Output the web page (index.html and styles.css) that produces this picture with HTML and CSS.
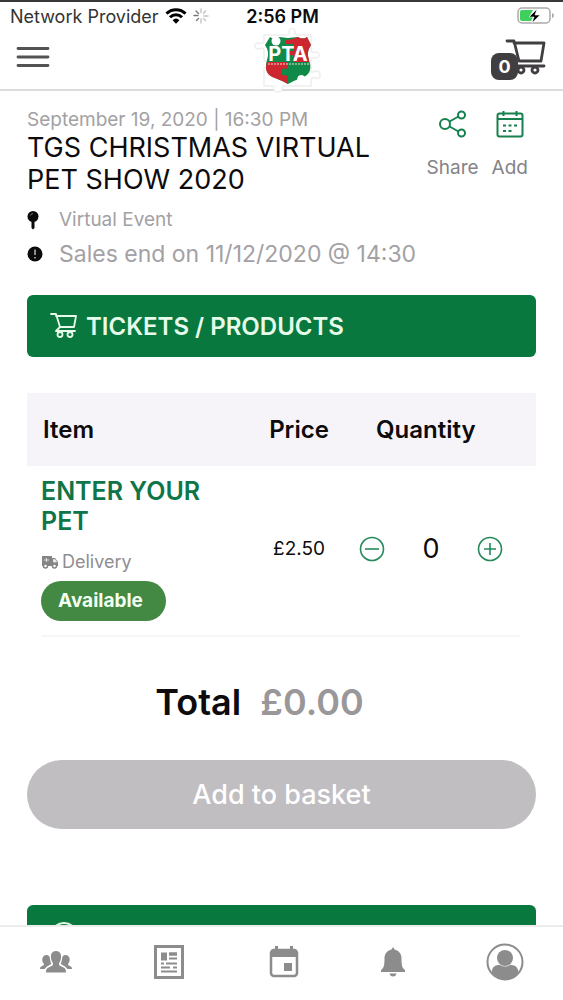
FILE: index.html
```
<!DOCTYPE html>
<html lang="en">

<head>
    <meta charset="UTF-8">
    <meta name="viewport" content="width=device-width, initial-scale=1.0">
    <title>TGS Christmas Virtual Pet Show 2020</title>
    <link rel="stylesheet" href="styles.css">
</head>

<body>
    <div class="status-bar">
        <div class="network">
            <span>Network Provider</span>
            <svg width="22" height="16" viewBox="0 0 22 16" fill="none" stroke="#000" stroke-width="3">
                <path d="M1.5 5.6a13.5 13.5 0 0 1 19 0M5 9.3a8.6 8.6 0 0 1 12 0" />
                <path d="M11 15.8l-3.4-3.6a5 5 0 0 1 6.8 0z" fill="#000" stroke="none" />
            </svg>
            <svg class="spinner" width="16" height="16" viewBox="0 0 16 16" stroke-width="1.4" stroke-linecap="round">
                <path d="M1 7.5h4M3 3l2.500 2.500M3.500 12.500l2-2" stroke="#777" />
                <path d="M8 1v3.500M8 11v4M12.500 3l-2 2.500M11 8h4M10.500 10.500l2 2" stroke="#c4c4c4" />
            </svg>
        </div>
        <strong class="clock">2:56 PM</strong>
        <svg class="battery" width="38" height="18" viewBox="0 0 38 18">
            <rect x="1" y="1" width="32" height="15" rx="4" fill="#fff" stroke="#aaa" stroke-width="1.5" />
            <path d="M35 6v5q2-.5 2-2.500t-2-2.500" fill="#aaa" />
            <path d="M5 3h11l-4 7h4l-2 4H5q-2 0-2-2V5q0-2 2-2z" fill="#3fcf5d" />
            <path d="M20 2l-8 8h5l-2 6 8-8h-5z" fill="#000" stroke="#fff" stroke-width=".6" />
        </svg>
    </div>

    <header class="top-bar">
        <button class="icon-button" type="button" aria-label="Menu">
            <svg width="34" height="22" viewBox="0 0 34 22" stroke="#555256" stroke-width="2.800" stroke-linecap="round">
                <path d="M2 2.500h30M2 11h30M2 19.500h30" />
            </svg>
        </button>
        <a class="logo" href="#" aria-label="PTA home">
            <svg width="74" height="66" viewBox="0 0 74 66">
                <path d="M12 7h23q3 0 2-4 1-3 3-3t3 3q-1 4 2 4h14v15q0 3 4 2 4 0 4 3t-4 3q-4-1-4 2v10q0 3 5 1 4 0 4 4t-4 3q-5-1-5 2v6H32q-3 0-2 4-1 2-4 2t-4-2q1-4-2-4h-8V41q0-3 4-2 4 0 4-3t-4-3q-4 1-4-2V22q0-3-5-1-4 0-4-3t4-3q5 1 5-2z" fill="#fff" stroke="#eee" stroke-width="1.500" />
                <path d="M18 9q4 3 9 0l9 1 10-1q5 3 9 0l4 8q-5 7-2 15 5 14-8 18-8 3-13 6-5-3-13-6-12-4-8-18 3-8-2-15z" fill="#0f8a48" />
                <path d="M34 12q5 0 12-3 5 3 9 0l4 8q-5 7-2 15v2H41v-7q-5 1-4-4h4v-7h-7z" fill="#ce2631" />
                <path d="M15 34h21v7q-7-2-7 3t7 3v9q-5-3-13-6-12-4-8-16z" fill="#ce2631" />
                <circle cx="24" cy="13" r="4.500" fill="#fff" />
                <path d="M45 53q0-6 4-6 4 0 4 4l-8 5z" fill="#fff" />
                <path d="M16 36h41" stroke="#f3d9d9" stroke-width="1" stroke-dasharray="2 1" />
                <text class="logo-text" x="36" y="33" text-anchor="middle">PTA</text>
            </svg>
        </a>
        <button class="icon-button cart" type="button" aria-label="Basket">
            <svg width="44" height="36" viewBox="0 0 44 36" fill="none" stroke="#413e41" stroke-width="2.800" stroke-linecap="round" stroke-linejoin="round">
                <path d="M5 2h7l5 20h22l3-18H12M16 27h26" />
                <circle cx="19" cy="31" r="3" />
                <circle cx="33" cy="31" r="3" />
            </svg>
            <span class="cart-count">0</span>
        </button>
    </header>

    <main class="content">
        <section class="event">
            <div class="event-title">
                <p class="date">September 19, 2020 | 16:30 PM</p>
                <h1>TGS CHRISTMAS VIRTUAL PET SHOW 2020</h1>
            </div>
            <div class="actions">
                <button class="action" type="button">
                    <svg width="28" height="28" viewBox="0 0 28 28" fill="none" stroke="#16804f" stroke-width="2">
                        <circle cx="6" cy="14" r="5" />
                        <circle cx="22.500" cy="5" r="3.500" />
                        <circle cx="22.500" cy="23" r="3.500" />
                        <path d="M10.500 11.500L19.500 6.500M10.500 16.500L19.500 21.500" />
                    </svg>
                    Share
                </button>
                <button class="action" type="button">
                    <svg width="28" height="28" viewBox="0 0 28 28" fill="none" stroke="#16804f" stroke-width="2">
                        <rect x="1.500" y="3.500" width="25" height="23" rx="2" />
                        <path d="M1.500 9h25M7.500 1v5M20.500 1v5" />
                        <path d="M7 15.500h3m2.500 0h3m2.500 0h3M7 21h3m2.500 0h3" />
                    </svg>
                    Add
                </button>
            </div>
        </section>

        <ul class="details">
            <li>
                <svg width="16" height="20" viewBox="0 0 16 20">
                    <circle cx="6" cy="6.500" r="5.500" fill="#0b0b0b" />
                    <path d="M4.500 11h3v7L6 19.500 4.500 18z" fill="#0b0b0b" />
                    <path d="M3.500 5.500q.5-2 2.500-2" fill="none" stroke="#777" />
                </svg>
                Virtual Event
            </li>
            <li class="sales-end">
                <svg width="16" height="16" viewBox="0 0 16 16">
                    <circle cx="8" cy="8" r="7.500" fill="#0b0b0b" />
                    <path d="M8 3.500v5.500M8 11v1.500" stroke="#bbb" stroke-width="1.500" />
                </svg>
                Sales end on 11/12/2020 @ 14:30
            </li>
        </ul>

        <h2 class="banner">
            <svg width="28" height="26" viewBox="0 0 28 26" fill="none" stroke="#e6fbe9" stroke-width="1.800" stroke-linecap="round" stroke-linejoin="round">
                <path d="M1 1h5l4 13h14l2-11H6M10 14l-4 4h19" />
                <circle cx="10" cy="21.500" r="2.500" />
                <circle cx="20" cy="21.500" r="2.500" />
            </svg>
            TICKETS / PRODUCTS
        </h2>

        <table class="products">
            <thead>
                <tr>
                    <th>Item</th>
                    <th class="price">Price</th>
                    <th class="quantity-heading">Quantity</th>
                </tr>
            </thead>
            <tbody>
                <tr>
                    <td>
                        <h3>ENTER YOUR PET</h3>
                        <p class="delivery">
                            <svg width="18" height="14" viewBox="0 0 18 14">
                                <path d="M1 1h10v2h3l3 4v4H1z" fill="#858585" />
                                <path d="M12.500 4.500h1.500l1.500 2.500h-3zM3 5h5M5.500 3v4" fill="#fff" stroke="#ddd" />
                                <circle cx="4.500" cy="11" r="2" fill="#fff" stroke="#858585" stroke-width="1.500" />
                                <circle cx="13.500" cy="11" r="2" fill="#fff" stroke="#858585" stroke-width="1.500" />
                            </svg>
                            Delivery
                        </p>
                        <span class="badge">Available</span>
                    </td>
                    <td class="price">£2.50</td>
                    <td class="quantity">
                        <button class="icon-button" type="button" aria-label="Decrease quantity">
                            <svg width="26" height="26" viewBox="0 0 26 26" fill="none" stroke="#25895a" stroke-width="1.600">
                                <circle cx="13" cy="13" r="11.500" />
                                <path d="M6 13h14" />
                            </svg>
                        </button>
                        <input type="text" inputmode="numeric" value="0" aria-label="Quantity">
                        <button class="icon-button" type="button" aria-label="Increase quantity">
                            <svg width="26" height="26" viewBox="0 0 26 26" fill="none" stroke="#25895a" stroke-width="1.600">
                                <circle cx="13" cy="13" r="11.500" />
                                <path d="M7 13h12M13 7v12" />
                            </svg>
                        </button>
                    </td>
                </tr>
            </tbody>
        </table>

        <p class="total">Total <span class="amount">£0.00</span></p>
        <button class="add-to-basket" type="button">Add to basket</button>

        <div class="banner">
            <svg width="28" height="28" viewBox="0 0 28 28" fill="none" stroke="#e6fbe9" stroke-width="2">
                <circle cx="14" cy="14" r="13" />
                <path d="M14 12v8M14 7v2" />
            </svg>
        </div>
    </main>

    <nav class="tab-bar">
        <a href="#" aria-label="Groups">
            <svg width="34" height="24" viewBox="0 0 34 24" fill="#8c8c8c">
                <path d="M17 1c4 0 5.500 3 5 7-.3 3-1.500 4-2 5.500 0 2 1 2.500 3.500 3.500C26 18 27 19 27 22.500H7c0-3.500 1-4.500 3.500-5.500 2.500-1 3.500-1.500 3.500-3.500-.5-1.500-1.700-2.500-2-5.500-.5-4 1-7 5-7z" />
                <path d="M7.500 5c2 0 3 1 3.300 3 .3 3 1 4.500 1.500 6L8 16.500 5.500 19H1c0-2 1-2.800 3.500-3.500L5 14c-3-3-2-9 2.500-9z" />
                <path d="M26.500 5c-2 0-3 1-3.300 3-.3 3-1 4.500-1.500 6l4.300 2.500 2.500 2.500H33c0-2-1-2.800-3.500-3.500L29 14c3-3 2-9-2.500-9z" />
            </svg>
        </a>
        <a href="#" aria-label="News">
            <svg width="32" height="36" viewBox="0 0 32 36" fill="none" stroke="#8c8c8c">
                <rect x="2.500" y="2.500" width="27" height="31" stroke-width="3" />
                <path d="M8 8.500h6v8H8z" fill="#8c8c8c" stroke="none" />
                <path d="M16 10h8" stroke-width="3.500" />
                <path d="M16 14.500h8M8 19.500h3m2 0h11M8 23.500h9m3 0h4M8 27.500h16" stroke-width="1.800" />
            </svg>
        </a>
        <a href="#" aria-label="Events">
            <svg width="34" height="34" viewBox="-3 0 34 34">
                <rect x="2" y="5" width="26" height="26" rx="3" fill="none" stroke="#8c8c8c" stroke-width="2.500" />
                <path d="M2 5h26v7H2zM6 1h3v5H6zM21 1h3v5h-3zM15 18h8v8h-8z" fill="#8c8c8c" />
            </svg>
        </a>
        <a href="#" aria-label="Notifications">
            <svg width="26" height="32" viewBox="0 0 26 32" fill="#8c8c8c">
                <path d="M13 1l1.500 2.500C19 4.500 21.500 8 21.500 12c0 7 .5 10 3.500 12v2H1v-2c3-2 3.500-5 3.500-12 0-4 2.500-7.500 7-8.500z" />
                <path d="M9.500 27.500h7c-.5 2-1.500 3-3.500 3s-3-1-3.500-3z" />
            </svg>
        </a>
        <a href="#" aria-label="Profile">
            <svg width="38" height="38" viewBox="0 0 38 38">
                <circle cx="19" cy="19" r="17.500" fill="none" stroke="#8c8c8c" stroke-width="2" />
                <circle cx="19" cy="15" r="8" fill="#8c8c8c" />
                <path d="M5.500 29q1-7 7-7h1.500q5 3 10 0H25.500q6 0 7 7-5.500 7.500-13.500 7.500T5.500 29z" fill="#8c8c8c" />
            </svg>
        </a>
    </nav>
</body>

</html>
```
FILE: styles.css
```
* {
    box-sizing: border-box;
}

body {
    margin: 0;
    height: 100vh;
    display: flex;
    flex-direction: column;
    background-color: #fff;
    color: #0d0b0d;
    font-family: Inter, "Liberation Sans", sans-serif;
    overflow: hidden;
}

h1,
h2,
h3,
p,
ul {
    margin: 0;
    padding: 0;
}

button,
input {
    padding: 0;
    border: 0;
    background: none;
    color: inherit;
    font-family: inherit;
}

svg {
    display: block;
    flex-shrink: 0;
}

.status-bar {
    display: grid;
    grid-template-columns: 1fr auto 1fr;
    align-items: center;
    height: 30px;
    padding: 0 8px 0 10px;
    border-top: 2px solid #3a383b;
    font-size: 18px;
}

.network {
    display: flex;
    align-items: center;
    gap: 6px;
    color: #333;
    white-space: nowrap;
}

.clock {
    font-weight: 600;
}

.battery {
    justify-self: end;
}

.top-bar {
    display: grid;
    grid-template: 100% / 1fr auto 1fr;
    align-items: center;
    height: 61px;
    padding: 0 17px 6px 16px;
    border-bottom: 2px solid #dcdcdc;
}

.icon-button {
    justify-self: start;
}

.logo {
    padding: 8px 0 0 16px;
}

.logo-text {
    fill: #fff;
    font-size: 20px;
    font-weight: 700;
}

.cart {
    position: relative;
    justify-self: end;
}

.cart-count {
    position: absolute;
    left: -11px;
    bottom: -5px;
    width: 27px;
    border-radius: 8px;
    background-color: #413e41;
    color: #fff;
    font-size: 18px;
    font-weight: 700;
    line-height: 27px;
}

.content {
    flex: 1;
    min-height: 0;
    padding: 17px 27px 0;
    overflow: hidden;
}

.event {
    display: flex;
    justify-content: space-between;
}

.event-title {
    flex: 1;
    padding-right: 32px;
}

.date {
    color: #a3a1a4;
    font-size: 19px;
    line-height: 24px;
}

h1 {
    font-size: 27px;
    font-weight: 400;
    line-height: 32px;
}

.actions {
    display: flex;
    align-items: flex-start;
    gap: 13px;
    padding: 2px 8px 0 0;
}

.action {
    display: flex;
    flex-direction: column;
    align-items: center;
    gap: 18px;
    color: #858386;
    font-size: 19px;
    line-height: 24px;
}

.details {
    list-style: none;
    color: #a3a1a4;
    font-size: 19px;
    line-height: 34px;
    padding-top: 7px;
}

.details li {
    display: flex;
    align-items: center;
    gap: 16px;
}

.details .sales-end {
    font-size: 23px;
}

.banner {
    display: flex;
    align-items: center;
    gap: 8px;
    height: 62px;
    margin-top: 24px;
    padding: 0 23px;
    border-radius: 6px;
    background-color: #09783e;
    color: #e6fbe9;
    font-size: 24px;
    font-weight: 600;
}

.products {
    display: block;
    margin-top: 36px;
}

.products thead,
.products tbody {
    display: block;
}

.products tr {
    display: grid;
    grid-template-columns: 1fr 86px 178px;
    align-items: center;
    margin: 0 16px 0 14px;
}

.products thead {
    background-color: #f6f4f8;
    font-size: 24px;
    line-height: 73px;
}

.products th,
.products td {
    padding: 0;
    text-align: left;
}

.products th {
    padding-left: 2px;
    font-weight: 600;
}

.products tbody tr {
    padding: 10px 0 14px;
    border-bottom: 2px solid #f6f6f6;
}

.products .price {
    padding: 0;
    font-size: 19px;
    text-align: center;
}

.products th.price {
    font-size: 24px;
}

.products .quantity-heading {
    padding-left: 34px;
}

.quantity {
    display: flex;
    align-items: center;
}

.products .quantity {
    padding-left: 17px;
}

.quantity input {
    width: 92px;
    font-size: 27px;
    text-align: center;
}

h3 {
    padding-right: 32px;
    color: #0d7547;
    font-size: 25px;
    font-weight: 600;
    line-height: 30px;
}

.delivery {
    display: flex;
    align-items: center;
    gap: 3px;
    margin: 14px 0 7px;
    color: #8f8d90;
    font-size: 18px;
    line-height: 24px;
}

.badge {
    display: inline-block;
    padding: 0 23px 0 17px;
    border-radius: 20px;
    background-color: #438843;
    color: #f2fff0;
    font-size: 19px;
    font-weight: 700;
    line-height: 40px;
}

.total {
    margin-top: 43px;
    padding-right: 44px;
    font-size: 36px;
    font-weight: 600;
    line-height: 44px;
    text-align: center;
}

.amount {
    margin-left: 10px;
    color: #99979a;
}

.add-to-basket {
    display: block;
    width: 100%;
    margin: 36px 0 76px;
    border-radius: 35px;
    background-color: #c1bec2;
    color: #fff;
    font-size: 27px;
    font-weight: 500;
    line-height: 69px;
}

.tab-bar {
    display: flex;
    align-items: center;
    justify-content: space-between;
    height: 75px;
    padding: 0 39px 4px;
    border-top: 2px solid #ececec;
}
```
